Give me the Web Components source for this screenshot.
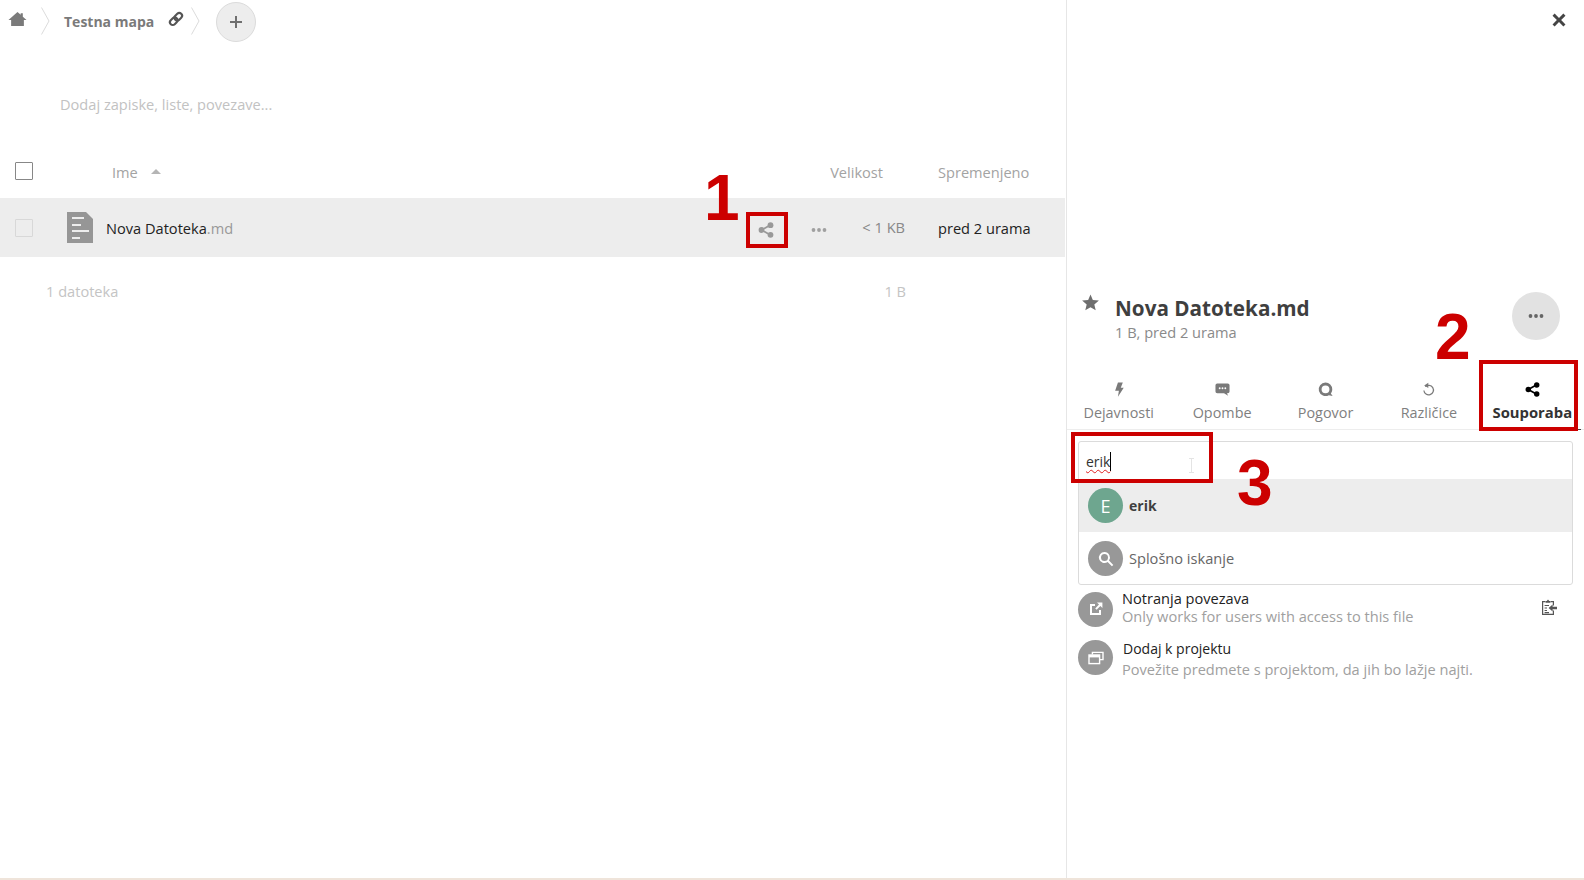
<!DOCTYPE html>
<html lang="sl">
<head>
<meta charset="utf-8">
<title>Souporaba</title>
<style>
  html, body { margin: 0; height: 100%; background: #fff; overflow: hidden; }
  body { font-family: "Open Sans", "Noto Sans", sans-serif; font-size: 14.6px; color: #222; }
</style>
</head>
<body>
<nc-app>
  <nc-files>
    <nc-breadcrumbs label="Testna mapa"></nc-breadcrumbs>
    <nc-file-table></nc-file-table>
  </nc-files>
  <nc-sidebar>
    <nc-share-panel></nc-share-panel>
  </nc-sidebar>
</nc-app>

<nc-mark n="1" box="746,212,42,36" num="704,161"></nc-mark>
<nc-mark n="2" box="1479,360,99,71" num="1435,300"></nc-mark>
<nc-mark n="3" box="1071,432,142,51" num="1237,446"></nc-mark>

<script>
const ICONS = {
  home: '<path d="M8 1 L11 3.6 V2 H13 V5.4 L16.5 8.4 H14 V14 H2 V8.4 H-.5 Z"/>',
  link: '<g transform="rotate(-45 8 8)" fill="none" stroke="currentColor" stroke-width="2.1"><rect x="0.6" y="5.2" width="8.4" height="5.6" rx="2.8"/><rect x="7" y="5.2" width="8.4" height="5.6" rx="2.8"/></g>',
  plus: '<path d="M7 2 H9 V7 H14 V9 H9 V14 H7 V9 H2 V7 H7 Z"/>',
  share: '<g stroke="currentColor" stroke-width="1.8"><path d="M3.5 8 L12.5 3 M3.5 8 L12.5 13" fill="none"/></g><circle cx="3.5" cy="8" r="2.9"/><circle cx="12.5" cy="3.2" r="2.9"/><circle cx="12.5" cy="12.8" r="2.9"/>',
  dots: '<circle cx="2.5" cy="8" r="1.9"/><circle cx="8" cy="8" r="1.9"/><circle cx="13.5" cy="8" r="1.9"/>',
  star: '<path d="M8 .4 L10.2 5.6 L15.9 6.1 L11.6 9.8 L12.9 15.4 L8 12.4 L3.1 15.4 L4.4 9.8 L.1 6.1 L5.8 5.6 Z"/>',
  close: '<path d="M3 .6 L8 5.6 L13 .6 L15.4 3 L10.4 8 L15.4 13 L13 15.4 L8 10.4 L3 15.4 L.6 13 L5.6 8 L.6 3 Z"/>',
  activity: '<path d="M7.4 .6 H12.6 L10.4 6 H13.6 L7.4 15.6 L8.4 9.2 H4.4 Z"/>',
  comment: '<path d="M2.4 1.5 H13.6 A1.9 1.9 0 0 1 15.5 3.4 V10 A1.9 1.9 0 0 1 13.6 11.9 H12.7 L14 14.6 L9.6 11.9 H2.4 A1.9 1.9 0 0 1 .5 10 V3.4 A1.9 1.9 0 0 1 2.4 1.5 Z"/><g fill="#fff"><circle cx="5" cy="6.7" r="1"/><circle cx="8" cy="6.7" r="1"/><circle cx="11" cy="6.7" r="1"/></g>',
  talk: '<path fill-rule="evenodd" d="M8 .6 A7.2 7.2 0 0 1 15.2 7.8 C15.2 9.5 14.7 11 13.7 12.2 L15.6 15 L11.6 14 A7.2 7.2 0 1 1 8 .6 Z M8 3.6 A4.2 4.2 0 1 0 8 12 A4.2 4.2 0 1 0 8 3.6 Z"/>',
  versions: '<g fill="none" stroke="currentColor" stroke-width="1.3"><path d="M4.6 5 A5.1 5.1 0 1 1 3.1 9"/></g><path d="M7.8 .8 V6.4 L3.4 3.8 Z"/>',
  search: '<path fill-rule="evenodd" d="M6.5 1 A5.5 5.5 0 0 1 11 9.6 L15.3 13.9 L13.9 15.3 L9.6 11 A5.5 5.5 0 1 1 6.5 1 Z M6.5 3 A3.5 3.5 0 1 0 6.5 10 A3.5 3.5 0 1 0 6.5 3 Z"/>',
  external: '<path d="M2 3 H7 V5 H4 V12 H11 V9 H13 V14 H2 Z"/><path d="M9 1.6 H14.4 V7 L12.4 5 L8.6 8.8 L7.2 7.4 L11 3.6 Z"/>',
  projects: '<g fill="none" stroke="currentColor" stroke-width="1.4"><path d="M4.4 4.6 V2.4 H15 V9.6 H12"/><rect x="1" y="5" width="10.6" height="8.6"/></g><path d="M1 5 H11.6 V7.4 H1 Z"/>',
  clipboard: '<g fill="none" stroke="currentColor" stroke-width="1.2"><path d="M4.4 2.6 H1.6 V15.4 H12.4 V11.6 M12.4 6.4 V2.6 H9.6"/><path d="M3.6 6.5 H8 M3.6 9 H6 M3.6 11.5 H6 M3.6 13.6 H8"/></g><path d="M4.6 3.8 V2 H5.8 L7 .5 L8.2 2 H9.4 V3.8 Z"/><path d="M16 7.8 H11.6 V5.6 L7.6 9 L11.6 12.4 V10.2 H16 Z"/>',
  file: '<path d="M1 0 H20 L27 7 V31 H1 Z" fill="#969696"/><g fill="#ededed"><rect x="6" y="5" width="12" height="2"/><rect x="6" y="12" width="9" height="2"/><rect x="6" y="18" width="17" height="2"/><rect x="6" y="25" width="8" height="2"/></g>'
};

class NcIcon extends HTMLElement {
  connectedCallback() {
    const name = this.getAttribute('name');
    const w = this.getAttribute('w') || 16;
    const h = this.getAttribute('h') || w;
    const box = name === 'file' ? '0 0 28 31' : '0 0 16 16';
    this.attachShadow({ mode: 'open' }).innerHTML = `
      <style>
        :host { display: inline-flex; flex: none; line-height: 0; }
        svg { display: block; overflow: visible; fill: currentColor; }
      </style>
      <svg width="${w}" height="${h}" viewBox="${box}">${ICONS[name]}</svg>`;
  }
}

class NcApp extends HTMLElement {
  constructor() {
    super();
    this.attachShadow({ mode: 'open' }).innerHTML = `
      <style>
        :host {
          display: flex;
          width: 1584px;
          height: 880px;
          box-sizing: border-box;
          border-bottom: 2px solid #efe4da;
        }
      </style>
      <slot></slot>`;
  }
}

class NcFiles extends HTMLElement {
  constructor() {
    super();
    this.attachShadow({ mode: 'open' }).innerHTML = `
      <style>
        :host { display: flex; flex-direction: column; width: 1066px; flex: none; }
      </style>
      <slot></slot>`;
  }
}

class NcBreadcrumbs extends HTMLElement {
  connectedCallback() {
    const label = this.getAttribute('label');
    this.attachShadow({ mode: 'open' }).innerHTML = `
      <style>
        :host { display: flex; align-items: center; height: 43px; color: #767676; }
        .home { margin-left: 9px; margin-top: -4px; color: #7a7a7a; }
        .sep { margin-top: -2px; color: #dcdcdc; }
        .sep svg { display: block; }
        .first { margin-left: 15px; }
        .name { margin-left: 14px; font-weight: 700; font-size: 14px; color: #7a7a7a; }
        .link { margin-left: 14px; margin-top: -5px; color: #555; }
        .second { margin-left: 7px; margin-top: -2px; }
        .add {
          margin-left: 16px;
          width: 40px;
          height: 40px;
          box-sizing: border-box;
          border: 1px solid #dbdbdb;
          border-radius: 50%;
          background: #ededed;
          display: flex;
          align-items: center;
          justify-content: center;
          color: #6f6f6f;
        }
      </style>
      <nc-icon class="home" name="home" w="17"></nc-icon>
      <span class="sep first"><svg width="9" height="28" viewBox="0 0 9 28"><path d="M.5 .5 L8 14 L.5 27.5" fill="none" stroke="currentColor"/></svg></span>
      <span class="name">${label}</span>
      <nc-icon class="link" name="link" w="16"></nc-icon>
      <span class="sep second"><svg width="9" height="28" viewBox="0 0 9 28"><path d="M.5 .5 L8 14 L.5 27.5" fill="none" stroke="currentColor"/></svg></span>
      <span class="add"><nc-icon name="plus" w="16"></nc-icon></span>`;
  }
}

class NcFileTable extends HTMLElement {
  constructor() {
    super();
    this.attachShadow({ mode: 'open' }).innerHTML = `
      <style>
        :host { display: block; color: #999; }
        .rich { padding: 50px 0 0 60px; height: 58px; line-height: 22px; color: #c2c2c2; }
        .head { display: flex; align-items: center; height: 47px; box-sizing: border-box; padding-bottom: 6px; }
        .box {
          box-sizing: border-box;
          width: 18px;
          height: 18px;
          margin-left: 15px;
          border: 1px solid #878787;
          border-radius: 1px;
          background: #fff;
          flex: none;
        }
        .head .box { margin-top: -1px; }
        .ime { margin-left: 79px; color: #a3a3a3; }
        .sort {
          margin-left: 13px;
          width: 0; height: 0;
          border: 5px solid transparent;
          border-top: 0;
          border-bottom: 5px solid #b5b5b5;
        }
        .spacer { flex: 1; }
        .h-size { margin-right: 55px; color: #a3a3a3; }
        .h-mod { width: 128px; flex: none; color: #a3a3a3; }
        .row {
          display: flex;
          align-items: center;
          height: 59px;
          width: 1065px;
          background: #ededed;
        }
        .row .box { border-color: #d8d8d8; background: #ededed; margin-top: 1px; }
        .row nc-icon.f { margin-left: 33px; }
        .fname { margin-left: 12px; color: #222; }
        .fname span { color: #999; }
        .share { margin-left: auto; color: #999; margin-right: 37px; margin-top: 4px; }
        .more { color: #a0a0a0; margin-right: 26px; margin-top: 4px; }
        .kb { width: 52px; text-align: right; color: #888; margin-top: -2px; white-space: nowrap; }
        .date { width: 127px; margin-left: 33px; color: #222; flex: none; }
        .foot { display: flex; height: 68px; align-items: center; color: #c4c4c4; }
        .count { margin-left: 46px; }
        .total { margin-left: auto; margin-right: 160px; }
      </style>
      <div class="rich">Dodaj zapiske, liste, povezave...</div>
      <div class="head">
        <span class="box"></span>
        <span class="ime">Ime</span>
        <span class="sort"></span>
        <span class="spacer"></span>
        <span class="h-size">Velikost</span>
        <span class="h-mod">Spremenjeno</span>
      </div>
      <div class="row">
        <span class="box"></span>
        <nc-icon class="f" name="file" w="28" h="31"></nc-icon>
        <span class="fname">Nova Datoteka<span>.md</span></span>
        <nc-icon class="share" name="share" w="16"></nc-icon>
        <nc-icon class="more" name="dots" w="16"></nc-icon>
        <span class="kb">&lt; 1 KB</span>
        <span class="date">pred 2 urama</span>
      </div>
      <div class="foot">
        <span class="count">1 datoteka</span>
        <span class="total">1 B</span>
      </div>`;
  }
}

class NcSidebar extends HTMLElement {
  constructor() {
    super();
    this.attachShadow({ mode: 'open' }).innerHTML = `
      <style>
        :host {
          display: flex;
          flex-direction: column;
          flex: 1;
          min-width: 0;
          border-left: 1px solid #e6e6e6;
          position: relative;
        }
        .close { position: absolute; top: 13px; right: 18px; color: #454545; }
        .top { display: flex; height: 96px; margin-top: 285px; }
        .star { margin: 9px 0 0 15px; color: #6e6e6e; }
        .titles { margin-left: 16px; padding-top: 8px; }
        h2 { margin: 0; font-size: 20.7px; line-height: 30px; font-weight: 700; color: #3f3f3f; }
        p { margin: 0; line-height: 19px; color: #8a8a8a; }
        .menu {
          margin-left: auto;
          margin-right: 24px;
          margin-top: 7px;
          width: 48px;
          height: 48px;
          border-radius: 50%;
          background: #e2e2e2;
          display: flex;
          align-items: center;
          justify-content: center;
          color: #666;
        }
        .tabs {
          display: flex;
          height: 48px;
          border-bottom: 1px solid #ededed;
        }
      </style>
      <nc-icon class="close" name="close" w="14"></nc-icon>
      <div class="top">
        <nc-icon class="star" name="star" w="17"></nc-icon>
        <div class="titles">
          <h2>Nova Datoteka.md</h2>
          <p>1 B, pred 2 urama</p>
        </div>
        <div class="menu"><nc-icon name="dots" w="16"></nc-icon></div>
      </div>
      <div class="tabs">
        <nc-tab icon="activity" label="Dejavnosti"></nc-tab>
        <nc-tab icon="comment" label="Opombe"></nc-tab>
        <nc-tab icon="talk" label="Pogovor"></nc-tab>
        <nc-tab icon="versions" label="Različice"></nc-tab>
        <nc-tab icon="share" label="Souporaba" active></nc-tab>
      </div>
      <slot></slot>`;
  }
}

class NcTab extends HTMLElement {
  connectedCallback() {
    const active = this.hasAttribute('active');
    this.attachShadow({ mode: 'open' }).innerHTML = `
      <style>
        :host {
          display: flex;
          flex-direction: column;
          align-items: center;
          flex: 1;
          position: relative;
          color: ${active ? '#333' : '#7f7f7f'};
          font-weight: ${active ? 700 : 400};
          ${active ? 'font-size: 14.8px;' : 'font-size: 14.4px;'}
        }
        nc-icon { margin-top: 1px; color: ${active ? '#000' : '#7a7a7a'}; }
        span { margin-top: 6px; line-height: 19px; white-space: nowrap; }
        ${active ? ':host::after { content: ""; position: absolute; left: 0; right: 3px; bottom: -1px; height: 1px; background: #444; }' : ''}
      </style>
      <nc-icon name="${this.getAttribute('icon')}" w="15"></nc-icon>
      <span>${this.getAttribute('label')}</span>`;
  }
}

class NcSharePanel extends HTMLElement {
  constructor() {
    super();
    this.attachShadow({ mode: 'open' }).innerHTML = `
      <style>
        :host { display: block; padding: 11px 11px 0 11px; }
        .combo {
          border: 1px solid #dbdbdb;
          border-radius: 3px;
          height: 144px;
          box-sizing: border-box;
        }
        .input { display: flex; align-items: center; height: 37px; padding: 2px 0 0 7px; box-sizing: border-box; position: relative; }
        .typed {
          color: #333;
          font-size: 14px;
          text-decoration: underline wavy #e02020;
          text-decoration-thickness: 1px;
          text-underline-offset: 2px;
        }
        .caret { width: 1px; height: 19px; background: #000; }
        .beam { position: absolute; left: 110px; top: 16px; width: 5px; height: 15px; color: #e4e4e4; }
        .option { display: flex; align-items: center; height: 53px; }
        .option.hit { background: #ededed; font-weight: 700; font-size: 14px; color: #3f3f3f; }
        .option:not(.hit) { color: #666; }
        .plain-label { margin-top: -2px; }
        .avatar {
          width: 35px;
          height: 35px;
          border-radius: 50%;
          flex: none;
          display: flex;
          align-items: center;
          justify-content: center;
          background: #989898;
          color: #fff;
        }
        .option .avatar { margin: 0 6px 0 9px; }
        .green { background: #6ea68f; font-weight: 400; font-size: 18px; }
        .line { display: flex; align-items: center; height: 50px; }
        .line .avatar { margin-right: 9px; }
        .texts { flex: 1; }
        .t { line-height: 18px; color: #222; font-size: 14.6px; }
        .s { line-height: 18px; color: #a0a0a0; }
        .first { margin-top: -1px; }
        .first .texts { margin-top: -4px; }
        .first .copy { margin-top: -4px; }
        .second { margin-top: -1px; }
        .second .avatar { margin-top: -1px; }
        .second .texts { padding-top: 2px; }
        .second .t { margin-left: 1px; line-height: 20px; font-size: 14px; }
        .second .s { line-height: 20px; }
        .copy { margin-right: 16px; color: #555; }
      </style>
      <div class="combo">
        <div class="input">
          <span class="typed">erik</span><span class="caret"></span>
          <svg class="beam" viewBox="0 0 5 15"><path d="M0 .5 H5 M2.5 .5 V14.5 M0 14.5 H5" fill="none" stroke="currentColor"/></svg>
        </div>
        <div class="option hit"><span class="avatar green">E</span>erik</div>
        <div class="option"><span class="avatar"><nc-icon name="search" w="16"></nc-icon></span><span class="plain-label">Splošno iskanje</span></div>
      </div>
      <div class="line first">
        <span class="avatar"><nc-icon name="external" w="16"></nc-icon></span>
        <div class="texts">
          <div class="t">Notranja povezava</div>
          <div class="s">Only works for users with access to this file</div>
        </div>
        <nc-icon class="copy" name="clipboard" w="16"></nc-icon>
      </div>
      <div class="line second">
        <span class="avatar"><nc-icon name="projects" w="16"></nc-icon></span>
        <div class="texts">
          <div class="t">Dodaj k projektu</div>
          <div class="s">Povežite predmete s projektom, da jih bo lažje najti.</div>
        </div>
      </div>`;
  }
}

// red numbered call-outs drawn over the screenshot
class NcMark extends HTMLElement {
  connectedCallback() {
    const [x, y, w, h] = this.getAttribute('box').split(',');
    const [nx, ny] = this.getAttribute('num').split(',');
    this.attachShadow({ mode: 'open' }).innerHTML = `
      <style>
        :host { display: contents; }
        .box {
          position: absolute;
          left: ${x}px; top: ${y}px; width: ${w}px; height: ${h}px;
          box-sizing: border-box;
          border: 4px solid #c00;
        }
        .num {
          position: absolute;
          left: ${nx}px; top: ${ny}px;
          font: 700 64px/74px "Liberation Sans", Arial, sans-serif;
          color: #c00;
        }
      </style>
      <div class="box"></div>
      <div class="num">${this.getAttribute('n')}</div>`;
  }
}

customElements.define('nc-icon', NcIcon);
customElements.define('nc-app', NcApp);
customElements.define('nc-files', NcFiles);
customElements.define('nc-breadcrumbs', NcBreadcrumbs);
customElements.define('nc-file-table', NcFileTable);
customElements.define('nc-sidebar', NcSidebar);
customElements.define('nc-tab', NcTab);
customElements.define('nc-share-panel', NcSharePanel);
customElements.define('nc-mark', NcMark);
</script>
</body>
</html>
